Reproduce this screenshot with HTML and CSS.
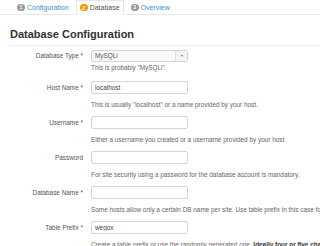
FILE: index.html
```html
<!DOCTYPE html>
<html lang="en">
<head>
    <meta charset="UTF-8">
    <meta name="viewport" content="width=device-width, initial-scale=1.0">
    <title>Database Configuration</title>
    <link rel="stylesheet" href="styles.css">
</head>
<body>
    <ul class="tabs">
        <li class="tab"><a href="#"><span class="badge">1</span>Configuration</a></li>
        <li class="tab active"><a href="#"><span class="badge badge-warning">2</span>Database</a></li>
        <li class="tab"><a href="#"><span class="badge">3</span>Overview</a></li>
    </ul>

    <div class="page">
        <h3 class="title">Database Configuration</h3>

        <form class="form">
            <div class="row row-select">
                <label class="label">Database Type *</label>
                <div class="controls">
                    <div class="select">
                        <span class="select-value">MySQLi</span>
                        <span class="select-arrow"></span>
                    </div>
                    <p class="help help-tight">This is probably "MySQLi".</p>
                </div>
            </div>
            <div class="row">
                <label class="label">Host Name *</label>
                <div class="controls">
                    <input class="input" type="text" value="localhost">
                    <p class="help">This is usually "localhost" or a name provided by your host.</p>
                </div>
            </div>
            <div class="row">
                <label class="label">Username *</label>
                <div class="controls">
                    <input class="input" type="text" value="">
                    <p class="help">Either a username you created or a username provided by your host.</p>
                </div>
            </div>
            <div class="row">
                <label class="label">Password</label>
                <div class="controls">
                    <input class="input" type="password" value="">
                    <p class="help">For site security using a password for the database account is mandatory.</p>
                </div>
            </div>
            <div class="row">
                <label class="label">Database Name *</label>
                <div class="controls">
                    <input class="input" type="text" value="">
                    <p class="help">Some hosts allow only a certain DB name per site. Use table prefix in this case for distinct Joomla! sites.</p>
                </div>
            </div>
            <div class="row">
                <label class="label">Table Prefix *</label>
                <div class="controls">
                    <input class="input" type="text" value="wegox_">
                    <p class="help">Create a table prefix or use the randomly generated one. <strong>Ideally four or five characters long, contain only alphanumeric characters, and MUST end in an underscore.</strong></p>
                </div>
            </div>
        </form>
    </div>
</body>
</html>
```

FILE: styles.css
```css
html, body {
    overflow: hidden;
}
body {
    margin: 0;
    font-family: "Liberation Sans", Arial, sans-serif;
    background: #fff;
    color: #333;
}
.tabs {
    list-style: none;
    margin: 0;
    padding: 0 0 0 13px;
    display: flex;
    gap: 3px;
    height: 14px;
    border-bottom: 1px solid #e8e8e8;
}
.tab a {
    display: flex;
    align-items: center;
    gap: 2px;
    height: 14px;
    padding: 0 4px;
    font-size: 7px;
    color: #3a8fd9;
    text-decoration: none;
    white-space: nowrap;
    box-sizing: border-box;
}
.tab.active a {
    background: #fff;
    color: #555;
    border: 1px solid #e8e8e8;
    border-bottom-color: #fff;
    height: 15px;
    padding: 0 3px;
}
.badge {
    display: inline-flex;
    align-items: center;
    justify-content: center;
    width: 8px;
    height: 7px;
    border-radius: 4px;
    background: #999;
    color: #fff;
    font-size: 5px;
    font-weight: bold;
}
.badge-warning {
    background: #f89406;
}
.page {
    padding-left: 10px;
}
.title {
    margin: 12px 0 0;
    padding-bottom: 4px;
    font-size: 11px;
    line-height: 14px;
    font-weight: bold;
    color: #333;
    border-bottom: 1px solid #eee;
}
.form {
    margin-top: 4px;
}
.row {
    display: grid;
    grid-template-columns: 73px 1fr;
    column-gap: 8px;
    margin-bottom: 6px;
}
.row-select {
    margin-bottom: 8px;
}
.label {
    text-align: right;
    font-size: 6.4px;
    line-height: 13px;
    color: #555;
    white-space: nowrap;
}
.row-select .label {
    line-height: 12px;
}
.controls {
    min-width: 0;
}
.input {
    display: block;
    box-sizing: border-box;
    width: 97px;
    height: 13px;
    margin: 0;
    padding: 0 3px 1px;
    border: 1px solid #d4d4d4;
    border-radius: 2px;
    font-family: "Liberation Sans", Arial, sans-serif;
    font-size: 6.4px;
    line-height: 11px;
    color: #444;
    background: #fff;
    outline: none;
}
.select {
    display: flex;
    box-sizing: border-box;
    width: 97px;
    height: 12px;
    border: 1px solid #d4d4d4;
    border-radius: 2px;
    background: #fafafa;
}
.select-value {
    flex: 1;
    padding-left: 3px;
    font-size: 6.4px;
    line-height: 10px;
    color: #555;
}
.select-arrow {
    width: 11px;
    border-left: 1px solid #ddd;
    background: #f3f3f3;
    display: flex;
    align-items: center;
    justify-content: center;
}
.select-arrow::after {
    content: "";
    border-left: 1.5px solid transparent;
    border-right: 1.5px solid transparent;
    border-top: 2px solid #777;
}
.help {
    margin: 6px 0 0;
    font-size: 6.4px;
    line-height: 10px;
    color: #666;
    white-space: nowrap;
}
.help-tight {
    margin-top: 1px;
}
.help strong {
    color: #333;
}
```
